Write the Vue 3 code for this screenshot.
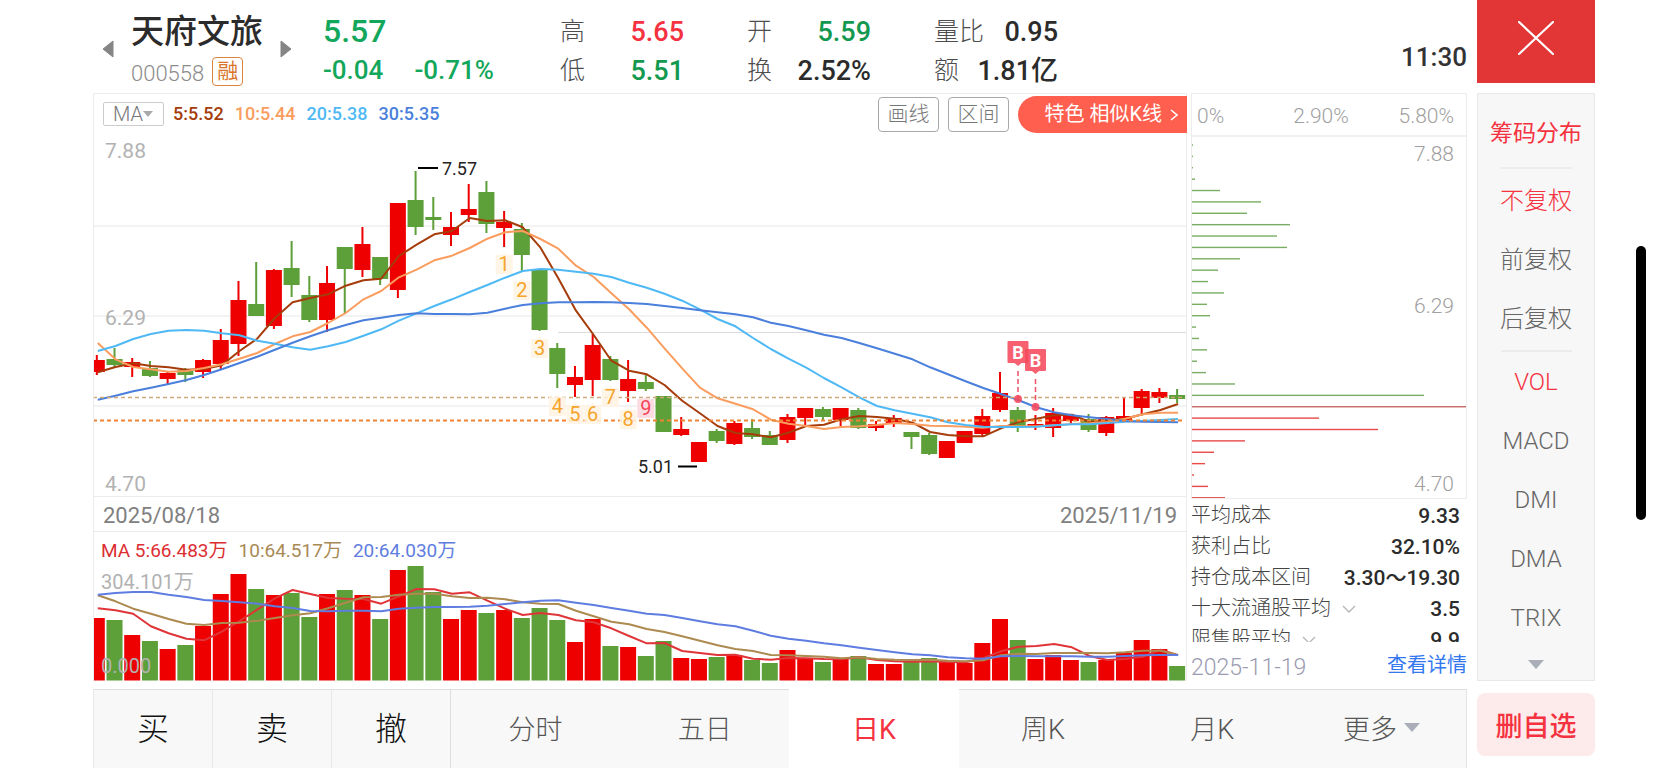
<script setup>
import { ref } from 'vue'

const STEP = 17.71
const FIRST = 96.8
const cx = (i) => FIRST + STEP * i
const points = (ys) => ys.map((y, i) => `${(cx(i) + 1).toFixed(1)},${y}`).join(' ')

// direction, high, body top, body bottom, low, top of the volume bar
const days = [
  ['r', 355, 360, 372, 375, 618], ['g', 348, 359, 365, 367, 620], ['r', 358, 362, 367, 377, 635],
  ['g', 361, 368, 376, 377, 641], ['r', 372, 373, 379, 385, 649], ['g', 368, 370, 375, 382, 645],
  ['r', 359, 360, 372, 378, 626], ['r', 329, 340, 364, 370, 594], ['r', 281, 300, 344, 356, 574],
  ['g', 262, 304, 316, 316, 589], ['r', 269, 270, 326, 329, 595], ['g', 241, 268, 285, 297, 593],
  ['g', 276, 295, 320, 322, 617], ['r', 266, 283, 320, 332, 594], ['g', 247, 247, 269, 313, 590],
  ['r', 227, 244, 270, 277, 595], ['g', 257, 257, 279, 285, 619], ['r', 203, 203, 290, 298, 570],
  ['g', 171, 200, 227, 235, 566], ['g', 197, 217, 220, 230, 592], ['r', 212, 227, 235, 246, 619],
  ['r', 184, 209, 215, 222, 610], ['g', 181, 192, 224, 233, 613], ['r', 211, 222, 228, 247, 610],
  ['g', 223, 229, 255, 272, 618], ['g', 269, 269, 330, 331, 608], ['g', 343, 348, 374, 388, 620],
  ['r', 366, 377, 385, 397, 642], ['r', 334, 345, 380, 396, 619], ['g', 356, 359, 380, 381, 646],
  ['r', 360, 379, 391, 402, 647], ['g', 374, 382, 389, 391, 656], ['g', 396, 396, 432, 432, 641],
  ['r', 417, 429, 435, 436, 658], ['r', 442, 442, 462, 462, 659], ['g', 429, 431, 441, 443, 657],
  ['r', 421, 423, 444, 445, 655], ['g', 419, 428, 437, 439, 660], ['g', 431, 435, 445, 445, 663],
  ['r', 414, 417, 440, 443, 650], ['r', 408, 408, 418, 426, 658], ['g', 407, 409, 417, 420, 662],
  ['r', 408, 408, 420, 426, 659], ['g', 408, 410, 428, 429, 656], ['r', 421, 424, 428, 431, 664],
  ['r', 415, 418, 424, 427, 664], ['g', 432, 432, 437, 449, 662], ['g', 433, 435, 454, 455, 658],
  ['r', 441, 441, 458, 458, 662], ['r', 431, 431, 443, 443, 663], ['r', 409, 416, 434, 437, 643],
  ['r', 372, 393, 410, 412, 619], ['g', 407, 410, 427, 432, 640], ['r', 415, 424, 426, 430, 659],
  ['r', 408, 413, 428, 437, 655], ['r', 414, 415, 421, 424, 660], ['g', 414, 419, 430, 432, 662],
  ['r', 416, 417, 433, 436, 660], ['r', 397, 416, 420, 420, 653], ['r', 389, 391, 408, 414, 640],
  ['r', 388, 392, 398, 403, 649], ['g', 389, 395, 399, 403, 666],
]

const priceLines = [
  { color: '#a53c0a', ys: [372.3, 367, 363.3, 366, 367.3, 369.7, 369, 365.3, 351, 338.7, 318, 302.3, 298, 294.3, 285.7, 280.3, 278.7, 256, 244.7, 234.3, 231, 218, 221, 220.3, 227.3, 247.7, 278.3, 310.7, 335, 360.7, 370.7, 374.3, 385, 400.7, 413.3, 426, 433, 434.3, 437.3, 432.7, 426, 424.7, 419.3, 416, 417, 418.7, 422.7, 432, 435, 436.3, 436.3, 428.3, 422, 418.7, 415.3, 414.7, 422, 420, 418.7, 414.3, 410, 404] },
  { color: '#fa9d5f', ys: [343, 359.3, 367, 369.3, 371.7, 371, 368, 364.3, 358.7, 353, 344, 336.3, 332, 323, 313, 299.3, 291, 277.3, 269.7, 260.3, 255.7, 248, 238.7, 232.3, 231, 239, 248.7, 265.7, 277, 293.3, 309.3, 327.7, 348.3, 368.3, 387.7, 398.3, 403.7, 409.3, 419.7, 423.7, 426, 429, 427, 426.3, 425, 423, 424, 425.7, 426, 426.7, 427.7, 426, 426.3, 426.3, 425.3, 424, 423.3, 422, 418.7, 414.3, 412.7, 412.7] },
  { color: '#4fb9f5', ys: [351, 346, 339, 334, 330.7, 330, 330.7, 333.3, 335.3, 340.7, 343.7, 347.3, 349.7, 346.3, 342, 335.7, 329.3, 320.7, 313.3, 306, 299.3, 292, 285, 277.7, 271, 269, 269.7, 271.7, 273.7, 277, 282.7, 287.7, 293.7, 300.7, 309.3, 319, 326.3, 338, 349, 358.7, 367.7, 378, 387.3, 397.3, 406, 410.3, 413.7, 417.3, 422.3, 425, 426.7, 427, 427, 426.7, 425.3, 424.3, 424.3, 423, 421.7, 421, 420, 419] },
  { color: '#4a7fdc', ys: [399.7, 395.7, 391.3, 387.7, 384, 380, 375, 369.3, 363, 356.7, 349.7, 342.7, 336.3, 330.3, 325, 320.3, 317.7, 315, 313.3, 314, 314, 314.3, 312.7, 308.7, 305, 303.3, 302.3, 302.3, 302, 302.3, 303, 304, 306, 308, 310.3, 312.3, 314.3, 317.3, 322.7, 326, 330.3, 334.7, 338, 343, 348.3, 353.7, 359.3, 367.3, 374.3, 381.3, 388, 394, 400.3, 407.3, 412.3, 415.3, 417.3, 419, 421, 421.7, 422, 422.3] },
]

const volumeLines = [
  { color: '#e03538', ys: [608.3, 610.3, 613.7, 626.3, 633.3, 638.7, 640.3, 631.7, 621, 609.7, 598.3, 590, 594, 598, 598.7, 599, 603.7, 596.3, 589, 589.3, 593.7, 592.3, 600.7, 608.7, 615, 613, 615, 620.3, 622.3, 628.3, 636, 643.3, 643, 651, 653, 655, 654.7, 658.7, 659.7, 658, 658.3, 659, 659.3, 657.3, 660, 661.3, 661.7, 661.3, 662, 662.3, 658.3, 651.3, 646.7, 646, 644, 647.3, 656, 660, 659, 656.7, 649.7, 655.3] },
  { color: '#ad8a50', ys: [595.3, 601.3, 608.7, 613.7, 619, 623.7, 625, 623, 622.7, 620.7, 618, 615.3, 613.3, 608.3, 602.7, 597.3, 597, 594.7, 593.7, 593.7, 596.3, 598, 597.7, 599.3, 602.3, 603.7, 604, 610.7, 616.3, 621.7, 624.3, 629, 632, 636.3, 640.7, 645.3, 649, 651, 655, 655.3, 656, 656.7, 658.3, 657.3, 659, 659.7, 660, 659.7, 660.7, 661.3, 660.3, 655.3, 653.7, 654, 653, 653, 653, 653.3, 652.3, 650.7, 650.7, 655] },
  { color: '#5f7de0', ys: [594.7, 593, 592, 592, 594.7, 597, 600, 601, 602.3, 603.7, 606.3, 608, 611, 611.3, 610.7, 610.7, 611.3, 608.7, 607.7, 607, 607, 606.7, 605.7, 604, 602.3, 600.7, 600.3, 602.7, 605, 608, 610.7, 613.7, 615, 618, 621.3, 624.3, 626.3, 630.7, 635.7, 638.7, 640.7, 643.3, 645.3, 647.7, 650, 652.3, 654.3, 655.3, 657.3, 658.3, 658.7, 656.3, 656, 656.3, 656.3, 656.3, 656.7, 656.7, 656, 655.3, 655, 655] },
]

const counts = [264, 290, 348, 406, 414, 414, 397, 419, 408].map((y, i) => ({ n: i + 1, x: cx(i + 23), y }))
const buys = [{ x: 1018, top: 341, dot: 399 }, { x: 1035.5, top: 349, dot: 407 }]

const chips = [2, 2, 2, 4, 29, 70, 56, 99, 86, 96, 49, 27, 17, 33, 16, 19, 5, 8, 16, 6, 15, 44, 233, 276, 128, 187, 54, 23, 14, 3, 17, 34]

const maLegend = [
  ['5:5.52', 'm5'], ['10:5.44', 'm10'], ['20:5.38', 'm20'], ['30:5.35', 'm30'],
]
const volLegend = [
  ['MA 5:66.483万', 'v5'], ['10:64.517万', 'v10'], ['20:64.030万', 'v20'],
]
const quotes = [
  { label: '高', value: '5.65', tone: 'up' }, { label: '开', value: '5.59', tone: 'down' }, { label: '量比', value: '0.95', tone: '' },
  { label: '低', value: '5.51', tone: 'down' }, { label: '换', value: '2.52%', tone: '' }, { label: '额', value: '1.81亿', tone: '' },
]
const stats = [
  { label: '平均成本', value: '9.33' }, { label: '获利占比', value: '32.10%' }, { label: '持仓成本区间', value: '3.30～19.30' },
  { label: '十大流通股平均', value: '3.5', more: true }, { label: '限售股平均', value: '9.9', more: true },
]
const adjust = ref('不复权')
const adjusts = ['不复权', '前复权', '后复权']
const indicator = ref('VOL')
const indicators = ['VOL', 'MACD', 'DMI', 'DMA', 'TRIX']
const period = ref('日K')
const periods = ['分时', '五日', '日K', '周K', '月K', '更多']
</script>

<template>
  <div class="screen">
    <div class="content">
      <header class="head">
        <button class="arrow" aria-label="上一只"><svg width="12" height="18" viewBox="0 0 12 18"><path d="M11 1v16L1 9z" fill="#858585" stroke="#858585" stroke-linejoin="round" /></svg></button>
        <div class="stock">
          <h1>天府文旅</h1>
          <div class="code"><span>000558</span><span class="badge">融</span></div>
        </div>
        <button class="arrow" aria-label="下一只"><svg width="12" height="18" viewBox="0 0 12 18"><path d="M1 1v16l10-8z" fill="#858585" stroke="#858585" stroke-linejoin="round" /></svg></button>
        <div class="price">
          <strong>5.57</strong>
          <div class="change"><span>-0.04</span><span>-0.71%</span></div>
        </div>
        <dl class="quotes">
          <div v-for="q in quotes" :key="q.label"><dt>{{ q.label }}</dt><dd :class="q.tone">{{ q.value }}</dd></div>
        </dl>
        <time class="clock">11:30</time>
      </header>

      <main class="panes">
        <section class="chart">
          <div class="tools">
            <label class="ma-pick">
              <select aria-label="指标"><option>MA</option></select>
              <svg width="10" height="6" viewBox="0 0 10 6"><path d="M0 0h10L5 6z" fill="#aaa" /></svg>
            </label>
            <span v-for="m in maLegend" :key="m[0]" class="legend" :class="m[1]">{{ m[0] }}</span>
            <button class="tool first">画线</button>
            <button class="tool">区间</button>
            <button class="special">特色 相似K线
              <svg width="8" height="12" viewBox="0 0 8 12"><path d="M1 1l6 5-6 5" fill="none" stroke="#fff" stroke-width="1.5" /></svg>
            </button>
          </div>

          <svg class="plot" viewBox="94 137 1092 359" role="img" aria-label="日K线图">
            <g stroke="#efefef" stroke-width="1.5"><path d="M93 226h1094M93 316h1094M93 406h1094" /></g>
            <path d="M558 332.5h629" stroke="#dcdcdc" />
            <g class="axis">
              <text x="105" y="158">7.88</text><text x="105" y="325">6.29</text><text x="105" y="491">4.70</text>
            </g>
            <g v-for="(d, i) in days" :key="i" :fill="d[0] === 'r' ? '#ee0000' : '#5d9f39'">
              <rect :x="cx(i) - 1" :y="d[1]" width="2" :height="d[4] - d[1]" />
              <rect :x="cx(i) - 8" :y="d[2]" width="16" :height="d[3] - d[2]" />
            </g>
            <polyline v-for="l in priceLines" :key="l.color" :points="points(l.ys)" :stroke="l.color" class="line" />
            <path d="M93 397.5h1090" stroke="#cfa878" stroke-width="1.5" stroke-dasharray="4 3" />
            <path d="M93 420.5h1090" stroke="#ee8434" stroke-width="2" stroke-dasharray="4 3" />
            <g v-for="c in counts" :key="c.n" :class="c.n === 9 ? 'count nine' : 'count'">
              <path :d="`M${c.x - 8.5} ${c.y - 9}h6l2.5-2 2.5 2h6v19h-17z`" />
              <text :x="c.x" :y="c.y + 7">{{ c.n }}</text>
            </g>
            <g v-for="b in buys" :key="b.x" class="buy">
              <path :d="`M${b.x} ${b.top + 30}V${b.dot}`" stroke="#f0506a" stroke-width="1.5" stroke-dasharray="5 3" />
              <circle :cx="b.x" :cy="b.dot" r="4" />
              <path :d="`M${b.x - 9.5} ${b.top}h19q1 0 1 1v20q0 1-1 1h-6l-3.5 3-3.5-3h-6q-1 0-1-1v-20q0-1 1-1z`" />
              <text :x="b.x" :y="b.top + 18">B</text>
            </g>
            <g class="mark">
              <path d="M418 168h20M678 466.5h19" /><text x="442" y="175">7.57</text><text x="638" y="473">5.01</text>
            </g>
          </svg>

          <div class="dates"><span>2025/08/18</span><span>2025/11/19</span></div>
          <div class="vol-legend"><span v-for="v in volLegend" :key="v[0]" :class="v[1]">{{ v[0] }}</span></div>

          <svg class="plot" viewBox="94 565 1092 116" role="img" aria-label="成交量">
            <g class="axis small"><text x="101" y="589">304.101万</text></g>
            <rect v-for="(d, i) in days" :key="i" :x="cx(i) - 8" :y="d[5]" width="16" :height="680.5 - d[5]" :fill="d[0] === 'r' ? '#ee0000' : '#5d9f39'" />
            <polyline v-for="l in volumeLines" :key="l.color" :points="points(l.ys)" :stroke="l.color" class="line" />
            <g class="axis small"><text x="101" y="673">0.000</text></g>
          </svg>
        </section>

        <aside class="chips">
          <div class="chip-box">
            <div class="scale"><span>0%</span><span>2.90%</span><span>5.80%</span></div>
            <svg class="plot" viewBox="1192 137 274 361" role="img" aria-label="筹码分布图">
              <rect v-for="(w, i) in chips" :key="i" x="1191" :y="144.3 + i * 11.38" :width="w" height="1.4" :fill="i < 23 ? '#79ad63' : i === 23 ? '#c96a66' : '#e84a4a'" />
              <g class="axis end"><text x="1454" y="161">7.88</text><text x="1454" y="313">6.29</text><text x="1454" y="491">4.70</text></g>
            </svg>
          </div>
          <dl class="stats">
            <div v-for="s in stats" :key="s.label">
              <dt>{{ s.label }}<svg v-if="s.more" width="14" height="8" viewBox="0 0 14 8"><path d="M1 1l6 6 6-6" fill="none" stroke="#b5b5b5" stroke-width="1.3" /></svg></dt>
              <dd>{{ s.value }}</dd>
            </div>
          </dl>
          <div class="foot"><time>2025-11-19</time><a href="#detail">查看详情</a></div>
        </aside>
      </main>

      <nav class="nav">
        <button v-for="t in ['买', '卖', '撤']" :key="t" class="trade">{{ t }}</button>
        <button v-for="p in periods" :key="p" class="period" :class="{ on: p === period }" @click="period = p">
          {{ p }}<svg v-if="p === '更多'" width="16" height="9" viewBox="0 0 16 9"><path d="M0 0h16L8 9z" fill="#a9aeb8" /></svg>
        </button>
      </nav>
    </div>

    <div class="side">
      <button class="close" aria-label="关闭"><svg width="36" height="34" viewBox="0 0 36 34"><path d="M1 1l34 32M35 1L1 33" stroke="#fff" stroke-width="2.2" stroke-linecap="round" /></svg></button>
      <div class="menu">
        <button class="on chip-tab">筹码分布</button>
        <hr>
        <button v-for="a in adjusts" :key="a" :class="{ on: a === adjust }" @click="adjust = a">{{ a }}</button>
        <hr>
        <button v-for="n in indicators" :key="n" :class="{ on: n === indicator }" @click="indicator = n">{{ n }}</button>
        <button class="more" aria-label="更多指标"><svg width="16" height="9" viewBox="0 0 16 9"><path d="M0 0h16L8 9z" fill="#a9aeb8" /></svg></button>
      </div>
      <button class="remove">删自选</button>
    </div>
    <div class="thumb"></div>
  </div>
</template>

<style>
body { margin: 0; background: #fff; }
</style>

<style scoped>
.screen {
  display: flex;
  gap: 10px;
  min-height: 100vh;
  padding: 0 68px 0 93px;
  box-sizing: border-box;
  position: relative;
  overflow: hidden;
  background: #fff;
  color: #333;
  font-family: Roboto, "Noto Sans CJK SC", sans-serif;
}
.screen * { box-sizing: border-box; }
button { border: 0; padding: 0; margin: 0; background: none; font: inherit; color: inherit; cursor: pointer; }
svg { display: block; }
dl, dd, h1 { margin: 0; }
.content { flex: 1; min-width: 0; display: flex; flex-direction: column; }

.head { display: flex; height: 93px; padding-left: 9px; }
.arrow { width: 12px; height: 18px; margin-top: 40px; flex: none; }
.stock { width: 149px; margin-left: 17px; flex: none; padding-top: 10px; }
h1 { font-size: 33px; line-height: 44px; font-weight: 500; white-space: nowrap; color: #2b2b2b; }
.code { display: flex; align-items: center; gap: 8px; height: 38px; font-size: 22px; font-weight: 300; color: #8c8c8c; }
.badge { width: 31px; height: 29px; margin-top: -4px; border: 1px solid #d9843f; border-radius: 4px; font-size: 21px; line-height: 26px; text-align: center; font-weight: 400; color: #d9752b; }
.price { width: 175px; margin-left: 31px; flex: none; color: #13a75b; font-weight: 500; padding-top: 11px; }
.price strong { display: block; font-size: 32px; line-height: 40px; font-weight: 500; }
.change { display: flex; gap: 31px; font-size: 26px; line-height: 38px; white-space: nowrap; }
.quotes { display: grid; grid-template-columns: 124px 124px 124px; column-gap: 63px; grid-auto-rows: 39px; margin-left: 62px; padding-top: 12px; }
.quotes div { display: flex; justify-content: space-between; line-height: 39px; white-space: nowrap; }
.quotes dt { font-size: 25px; font-weight: 300; color: #4d4d4d; }
.quotes dd { font-size: 27px; line-height: 41px; font-weight: 500; color: #2b2b2b; }
.quotes .up { color: #f5323f; }
.quotes .down { color: #13994f; }
.clock { margin-left: auto; margin-top: 39px; font-size: 26px; line-height: 36px; font-weight: 500; }

.panes { display: flex; gap: 4px; }
.chart { flex: 1; min-width: 0; border: 1px solid #ececec; border-bottom: 0; }
.plot { width: 100%; height: auto; }
.tools { display: flex; align-items: center; height: 43px; padding: 0 0 2px 9px; gap: 9px; }
.ma-pick { display: flex; align-items: center; width: 61px; height: 24px; padding: 0 9px; border: 1px solid #ccc; border-radius: 2px; margin-top: -2px; }
.ma-pick select { appearance: none; border: 0; padding: 0; background: none; width: 30px; font: 300 20px/22px Roboto, sans-serif; color: #777; }
.legend { font-size: 18px; font-weight: 500; margin: -2px 2px 0 0; }
.m5 { color: #a53c0a; }
.m10 { color: #fa9d5f; }
.m20 { color: #4fb9f5; }
.m30 { color: #4a7fdc; }
.tool { width: 61px; height: 35px; border: 1px solid #a8a8a8; border-radius: 4px; font-size: 21px; line-height: 31px; font-weight: 300; color: #777; }
.tool.first { margin-left: auto; }
.special { display: flex; align-items: center; justify-content: flex-end; gap: 8px; width: 169px; height: 37px; margin-right: -1px; padding-right: 9px; border-radius: 19px 0 0 19px; background: #ff5f4f; color: #fff; font-size: 20px; line-height: 35px; white-space: nowrap; }
.axis { font-size: 21px; fill: #b2b2b2; }
.axis.small { font-size: 20px; }
.axis.end { text-anchor: end; font-weight: 300; fill: #a0a0a0; }
.line { fill: none; stroke-width: 2; stroke-linejoin: round; }
.count { text-anchor: middle; font-size: 20px; }
.count path { fill: #fff3e2; fill-opacity: .85; }
.count text { fill: #f5a42c; }
.count.nine path { fill: #fcd6dc; }
.count.nine text { fill: #f5455c; }
.buy { fill: #f54a5c; fill-opacity: .88; text-anchor: middle; font-size: 18px; font-weight: 700; }
.buy text { fill: #fff; fill-opacity: 1; }
.mark { font-size: 18px; fill: #222; stroke: none; }
.mark path { stroke: #000; stroke-width: 2; }
.dates { display: flex; justify-content: space-between; height: 36px; padding: 0 9px; border: solid #ececec; border-width: 1px 0; font-size: 22px; line-height: 37px; color: #808080; }
.vol-legend { display: flex; gap: 11px; height: 33px; padding-left: 7px; font-size: 19px; line-height: 37px; white-space: nowrap; }
.v5 { color: #dc2f33; }
.v10 { color: #a98a55; }
.v20 { color: #5f7de0; }

.chips { width: 276px; flex: none; }
.chip-box { border: 1px solid #ececec; }
.scale { display: grid; grid-template-columns: 95px 58px 1fr; height: 43px; padding: 0 12px 0 5px; border-bottom: 2px solid #f1f1f1; font-size: 21px; line-height: 45px; font-weight: 300; color: #a0a0a0; }
.scale span:nth-child(2) { text-align: center; }
.scale span:last-child { text-align: right; }
.stats { height: 143px; padding-top: 1px; overflow: hidden; }
.stats div { display: flex; justify-content: space-between; height: 31px; line-height: 31px; padding-right: 7px; }
.stats dt { display: flex; align-items: center; gap: 11px; font-size: 20px; font-weight: 300; color: #444; white-space: nowrap; }
.stats dd { font-size: 21px; line-height: 33px; font-weight: 500; color: #2b2b2b; }
.foot { display: flex; justify-content: space-between; align-items: flex-start; padding-top: 13px; line-height: 26px; font-size: 23px; font-weight: 300; color: #9a9bb0; }
.foot a { font-size: 20px; font-weight: 400; color: #3478f0; text-decoration: none; line-height: 21px; }

.nav { display: flex; margin-top: auto; height: 79px; border-right: 1px solid #e4e4e4; }
.nav button { background: #f8f8f8; border-top: 1px solid #dedede; padding-bottom: 4px; }
.nav .trade { width: 119px; flex: none; border-left: 1px solid #e8e8e8; padding-bottom: 6px; font-size: 32px; font-weight: 300; color: #111; }
.period { flex: 1; display: flex; align-items: center; justify-content: center; gap: 7px; font-size: 27px; font-weight: 300; color: #555; }
.nav .trade + .period { border-left: 1px solid #dedede; }
.nav .period.on { background: #fff; border-top-color: #fff; color: #f5323f; font-weight: 400; }

.side { width: 118px; flex: none; }
.side button { display: flex; align-items: center; justify-content: center; width: 100%; }
.side .close { height: 83px; padding-bottom: 8px; background: #e23535; }
.menu { height: 588px; margin-top: 10px; padding-top: 4px; background: #f7f7f7; border: 1px solid #e8e8e8; overflow: hidden; }
.menu button { height: 59px; font-size: 24px; font-weight: 300; color: #666; white-space: nowrap; }
.menu .on { color: #f5323f; }
.menu .chip-tab { height: 65px; font-weight: 400; font-size: 23px; }
.menu hr { width: 71px; height: 2px; margin: 4px auto 0; border: 0; background: #ececec; }
.menu .more { height: 34px; }
.side .remove { height: 63px; margin-top: 12px; padding-bottom: 1px; border-radius: 8px; background: #fdeaea; color: #f5323f; font-size: 27px; font-weight: 500; }
.thumb { position: absolute; right: 17px; top: 246px; width: 10px; height: 274px; border-radius: 5px; background: #000; }
</style>
